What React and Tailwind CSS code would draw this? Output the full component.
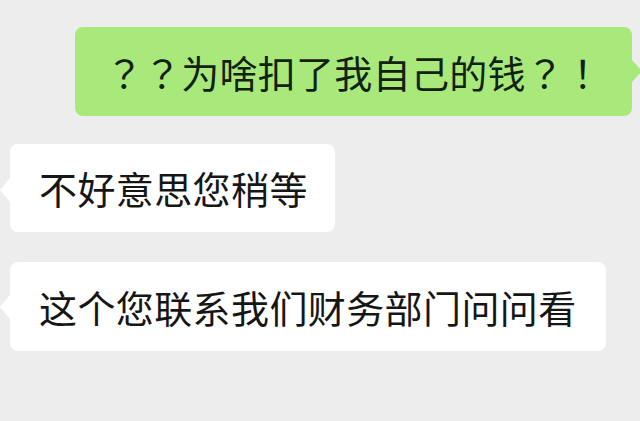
import React from "react";

const font = { fontFamily: '"Noto Sans CJK SC", "Noto Sans", sans-serif' };

function P({ children }) {
  return (
    <span className="inline-block w-[38px] text-center font-['Noto_Sans_CJK_JP',sans-serif]">
      {children}
    </span>
  );
}

export default function App() {
  return (
    <div
      className="w-[640px] h-[421px] bg-[#ededed] overflow-hidden flex flex-col pt-[27px]"
      style={font}
    >
      <div className="flex justify-end pr-[8px]">
        <div className="relative bg-[#a9e97c] rounded-[8px] h-[89px] w-[557px] flex items-center justify-center">
          <span className="text-[38px] leading-[38px] text-[#112211] tracking-[0.3px] whitespace-nowrap">
            <P>？</P>
            <P>？</P>
            为啥扣了我自己的钱
            <P>？</P>
            <P>！</P>
          </span>
          <div className="absolute right-[-10px] top-[33px] w-0 h-0 border-y-[11px] border-y-transparent border-l-[10px] border-l-[#a9e97c]" />
        </div>
      </div>
      <div className="flex pl-[10px] mt-[28px]">
        <div className="relative bg-white rounded-[8px] h-[88px] pl-[29px] pr-[27px] flex items-center">
          <span className="text-[38px] leading-[38px] text-[#161616] tracking-[0.4px]">
            不好意思您稍等
          </span>
          <div className="absolute left-[-10px] top-[34px] w-0 h-0 border-y-[12px] border-y-transparent border-r-[10px] border-r-white" />
        </div>
      </div>
      <div className="flex pl-[10px] mt-[30px]">
        <div className="relative bg-white rounded-[8px] h-[89px] pl-[29px] pr-[29px] flex items-center">
          <span className="text-[38px] leading-[38px] text-[#161616] tracking-[0.4px]">
            这个您联系我们财务部门问问看
          </span>
          <div className="absolute left-[-10px] top-[33px] w-0 h-0 border-y-[12px] border-y-transparent border-r-[10px] border-r-white" />
        </div>
      </div>
    </div>
  );
}
